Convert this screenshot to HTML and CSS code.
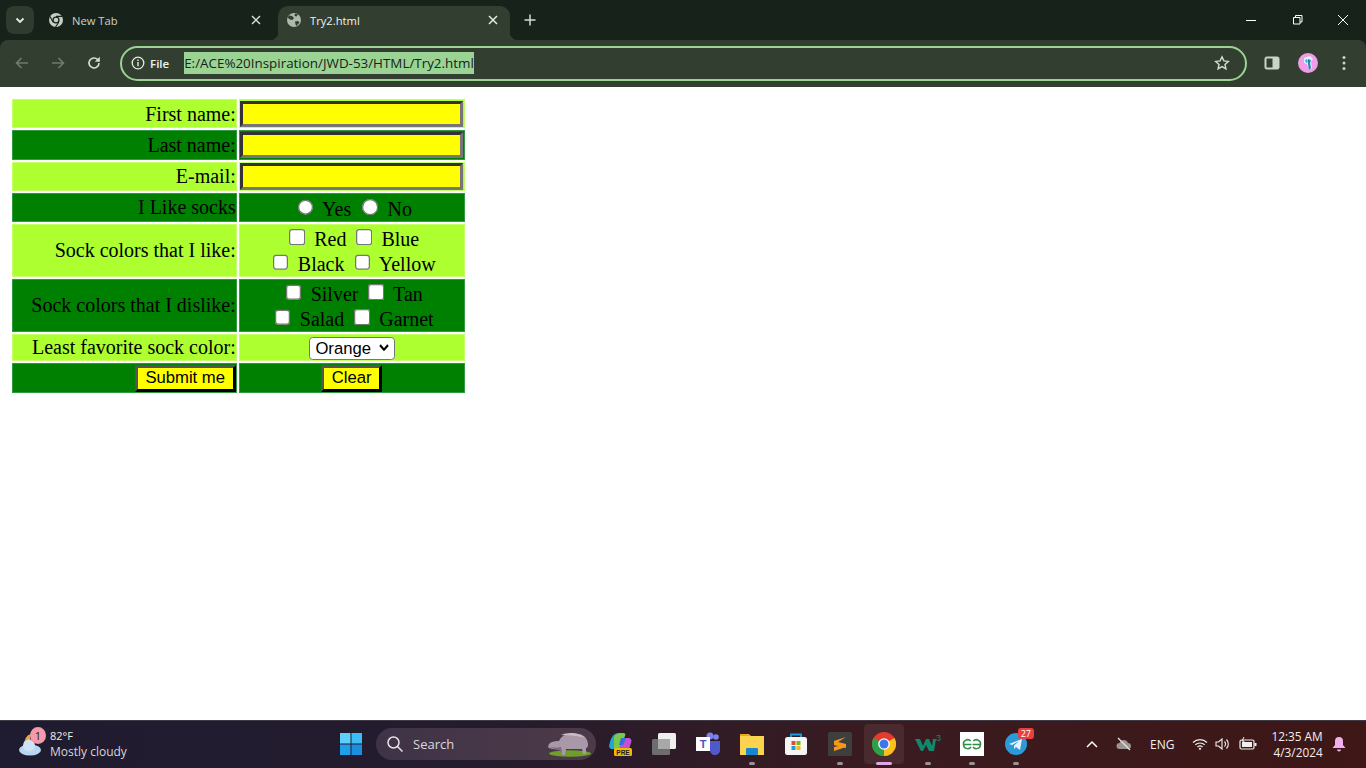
FILE: index.html
```html
<!DOCTYPE html>
<html lang="en">
<head>
  <meta charset="UTF-8">
  <meta name="viewport" content="width=device-width, initial-scale=1.0">
  <title>Try2.html</title>
  <link rel="stylesheet" href="styles.css">
</head>
<body>
  <div class="screen">
    <!-- browser tabs -->
    <div class="tabstrip">
      <div class="tab-search">
        <svg width="12" height="12" viewBox="0 0 12 12"><path d="M2.500 4.500 6 8l3.500-3.500" fill="none" stroke="#e4ece2" stroke-width="1.800"/></svg>
      </div>
      <div class="tab">
        <svg class="favicon" width="16" height="16" viewBox="0 0 16 16"><circle cx="8" cy="8" r="7" fill="#c6cec4"/><circle cx="8" cy="8" r="3.600" fill="#17231a"/><circle cx="8" cy="8" r="2.300" fill="#c6cec4"/><path d="M8 4.400h6M5 10 2 4.500M10.800 10.200 7.500 15" stroke="#17231a" stroke-width="1.100"/></svg>
        <span class="tab-title">New Tab</span>
        <svg class="tab-close" width="10" height="10" viewBox="0 0 10 10"><path d="M1 1l8 8M9 1 1 9" stroke="#d5ddd3" stroke-width="1.500"/></svg>
      </div>
      <div class="tab tab-active">
        <svg class="favicon" width="16" height="16" viewBox="0 0 16 16"><circle cx="8" cy="8" r="7" fill="#aeb8ac"/><path d="M3 3.500l3 .5 2 2-1.500 2-2.500-.5-2.500-2zM9 9.500l3-.5 1.500 1.500-3 3.500-1-1.500zM9 1.500l3 1-1.500 2-2-.5z" fill="#323f30"/></svg>
        <span class="tab-title">Try2.html</span>
        <svg class="tab-close" width="10" height="10" viewBox="0 0 10 10"><path d="M1 1l8 8M9 1 1 9" stroke="#e4ece2" stroke-width="1.500"/></svg>
      </div>
      <svg class="new-tab" width="12" height="12" viewBox="0 0 12 12"><path d="M6 .5v11M.5 6h11" stroke="#d5ddd3" stroke-width="1.500"/></svg>
      <div class="win-buttons">
        <svg width="46" height="12" viewBox="0 0 46 12"><path d="M18 6.500h10" stroke="#fff"/></svg>
        <svg width="46" height="12" viewBox="0 0 46 12"><path d="M19.500 3.500h6.500v6.500h-6.500zM21.500 3.500v-2h6.500v6.500h-2" fill="none" stroke="#fff"/></svg>
        <svg width="46" height="12" viewBox="0 0 46 12"><path d="M18 1l10 10M28 1 18 11" stroke="#fff"/></svg>
      </div>
    </div>

    <!-- address bar -->
    <div class="toolbar">
      <svg class="nav-icon" width="16" height="16" viewBox="0 0 16 16"><path d="M14 8H2.500M7.500 3l-5 5 5 5" fill="none" stroke="#6e7c6c" stroke-width="1.600"/></svg>
      <svg class="nav-icon" width="16" height="16" viewBox="0 0 16 16"><path d="M2 8h11.500M8.500 3l5 5-5 5" fill="none" stroke="#6e7c6c" stroke-width="1.600"/></svg>
      <svg class="nav-icon" width="16" height="16" viewBox="0 0 16 16"><path d="M13 8a5 5 0 1 1-1.500-3.600L13 6" fill="none" stroke="#d5ddd3" stroke-width="1.600"/><path d="M13.800 1.800v5h-5z" fill="#d5ddd3"/></svg>
      <div class="omnibox">
        <svg width="14" height="14" viewBox="0 0 14 14"><circle cx="7" cy="7" r="5.800" fill="none" stroke="#e4ece2" stroke-width="1.300"/><path d="M7 6v4.200M7 3.500v1.500" stroke="#e4ece2" stroke-width="1.400"/></svg>
        <span class="file-chip">File</span>
        <span class="url">E:/ACE%20Inspiration/JWD-53/HTML/Try2.html</span>
        <svg class="star" width="16" height="16" viewBox="0 0 16 16"><path d="M8 1.800l1.900 4.100 4.400.5-3.300 3 .9 4.400L8 11.600l-3.900 2.200.9-4.400-3.300-3 4.400-.5z" fill="none" stroke="#d5ddd3" stroke-width="1.400"/></svg>
      </div>
      <svg class="side-icon" width="16" height="14" viewBox="0 0 16 14"><rect x="1" y="1" width="14" height="12" rx="1.500" fill="#c9d6c6" stroke="#c9d6c6"/><rect x="2.500" y="2.500" width="6" height="9" fill="#323f30"/></svg>
      <svg class="avatar" width="20" height="20" viewBox="0 0 20 20"><circle cx="10" cy="10" r="10" fill="#f29be8"/><path d="M6 5l6-2 3 3-2 3 1 6-3 2-2-6-3-1z" fill="#dff2fb"/><path d="M10 6l3 1-1 3 1 5-2 2-1-6z" fill="#2f7fb5"/><path d="M7 7l2-1 1 3-2 1z" fill="#31b6d8"/></svg>
      <svg class="menu-dots" width="4" height="16" viewBox="0 0 4 16"><circle cx="2" cy="2.500" r="1.500" fill="#c9d6c6"/><circle cx="2" cy="8" r="1.500" fill="#c9d6c6"/><circle cx="2" cy="13.500" r="1.500" fill="#c9d6c6"/></svg>
    </div>

    <!-- the page itself, shown at 125% -->
    <main class="page">
      <form>
        <table class="sock-form">
          <tr class="light">
            <td class="label">First name:</td>
            <td class="field"><input type="text" class="text-input"></td>
          </tr>
          <tr class="dark">
            <td class="label">Last name:</td>
            <td class="field"><input type="text" class="text-input"></td>
          </tr>
          <tr class="light">
            <td class="label">E-mail:</td>
            <td class="field"><input type="text" class="text-input"></td>
          </tr>
          <tr class="dark">
            <td class="label">I Like socks</td>
            <td class="field">
              <input type="radio" name="likes"> Yes
              <input type="radio" name="likes"> No
            </td>
          </tr>
          <tr class="light">
            <td class="label">Sock colors that I like:</td>
            <td class="field">
              <input type="checkbox"> Red
              <input type="checkbox"> Blue<br>
              <input type="checkbox"> Black
              <input type="checkbox"> Yellow
            </td>
          </tr>
          <tr class="dark">
            <td class="label">Sock colors that I dislike:</td>
            <td class="field">
              <input type="checkbox"> Silver
              <input type="checkbox"> Tan<br>
              <input type="checkbox"> Salad
              <input type="checkbox"> Garnet
            </td>
          </tr>
          <tr class="light">
            <td class="label">Least favorite sock color:</td>
            <td class="field">
              <select class="color-select"><option>Orange</option><option>Silver</option><option>Tan</option></select>
            </td>
          </tr>
          <tr class="dark">
            <td class="label"><button type="submit" class="form-btn">Submit me</button></td>
            <td class="field"><button type="reset" class="form-btn">Clear</button></td>
          </tr>
        </table>
      </form>
    </main>

    <!-- windows taskbar -->
    <footer class="taskbar">
      <div class="weather">
        <div class="weather-icon">
          <svg width="28" height="28" viewBox="0 0 28 28"><path d="M8 14a8 8 0 0 1 6-10 7 7 0 0 0 3 10z" fill="#f0a63a"/><ellipse cx="13" cy="20" rx="11" ry="5.500" fill="#b8d6f0"/><circle cx="12" cy="15.500" r="6" fill="#cfe3f5"/></svg>
          <span class="weather-badge">1</span>
        </div>
        <div class="weather-text">
          <span class="temp">82°F</span>
          <span class="cond">Mostly cloudy</span>
        </div>
      </div>

      <div class="task-center">
        <div class="task-slot">
          <svg width="24" height="24" viewBox="0 0 24 24"><path d="M1 1h10.500v10.500H1z" fill="#5cd0fb"/><path d="M12.500 1H23v10.500H12.500z" fill="#3dbdf5"/><path d="M1 12.500h10.500V23H1z" fill="#1f9fe8"/><path d="M12.500 12.500H23V23H12.500z" fill="#1a8fe0"/></svg>
        </div>
        <div class="search-box">
          <svg width="18" height="18" viewBox="0 0 18 18"><circle cx="7.500" cy="7.500" r="5.500" fill="none" stroke="#e6e3e6" stroke-width="1.500"/><path d="M11.500 11.500l5 5" stroke="#e6e3e6" stroke-width="1.500"/></svg>
          <span class="search-label">Search</span>
          <svg class="search-pig" width="44" height="26" viewBox="0 0 44 26"><ellipse cx="23" cy="22.500" rx="21" ry="3.200" fill="#6f9f2a"/><path d="M12 10c3-7 12-9 20-7 6 1 9 6 9 11 0 2-1 3-2 3v6h-3l-1-5H19l-1 6h-3l-1-6c-3 1-9 0-12-1-2-1 0-5 3-6 2-1 5-1 7-1z" fill="#a998a8"/><path d="M14 4c6-3 18-3 24 3-8-3-16-2-24-3z" fill="#c9bac6"/><path d="M2 15c4 2 8 2 12 1l1 6-3-3c-3 0-7-2-10-4z" fill="#7c6e7a"/></svg>
        </div>
        <div class="task-icons">
          <div class="task-slot">
            <svg width="26" height="26" viewBox="0 0 26 26"><path d="M2 16C3 8 6 2 12 2h5l-6 16H4z" fill="#1ea7d8"/><path d="M7 6c2-4 6-4 9-4 2 0 3 1 2 3l-5 13H7z" fill="#7cc84a"/><path d="M15 7h6c3 0 4 2 3 5l-2 6H12z" fill="#c44fd0"/><path d="M14 7h5l-3 7h-4z" fill="#2f6fe0"/><rect x="7" y="17" width="18" height="8" rx="1.500" fill="#f5b800"/><text x="16" y="23.500" class="pre-text">PRE</text></svg>
          </div>
          <div class="task-slot">
            <svg width="26" height="24" viewBox="0 0 26 24"><rect x="7" y="1" width="18" height="16" rx="1.500" fill="#efefef"/><rect x="1" y="7" width="18" height="16" rx="1.500" fill="#6d6d6d"/><rect x="7" y="7" width="12" height="10" fill="#a8a8a8"/></svg>
          </div>
          <div class="task-slot">
            <svg width="26" height="24" viewBox="0 0 26 24"><circle cx="21" cy="5" r="2.800" fill="#7b83eb"/><circle cx="15" cy="4" r="3.500" fill="#7b83eb"/><path d="M13 9h12v8a5 5 0 0 1-10 2l-2-3z" fill="#5059c9"/><rect x="1" y="5" width="14" height="14" fill="#fff"/><text x="8" y="16" class="teams-text">T</text></svg>
          </div>
          <div class="task-slot">
            <svg width="26" height="24" viewBox="0 0 26 24"><path d="M1 2h9l2 2h-11z" fill="#e8a820"/><path d="M1 4h24v19H1z" fill="#fbd34e"/><rect x="7" y="16" width="12" height="7" rx="1" fill="#1b86d0"/></svg>
            <span class="run-dot"></span>
          </div>
          <div class="task-slot">
            <svg width="24" height="24" viewBox="0 0 24 24"><path d="M7 6V2.500h10V6" fill="none" stroke="#1b9ee0" stroke-width="1.800"/><rect x="1" y="5" width="22" height="18" rx="2.500" fill="#f5f5f5"/><rect x="7.500" y="9" width="4" height="4" fill="#e2522b"/><rect x="12.500" y="9" width="4" height="4" fill="#7fb61c"/><rect x="7.500" y="14" width="4" height="4" fill="#1b9ee0"/><rect x="12.500" y="14" width="4" height="4" fill="#fbb900"/></svg>
          </div>
          <div class="task-slot">
            <svg width="24" height="24" viewBox="0 0 24 24"><rect width="24" height="24" rx="1.500" fill="#3e3e3e"/><path d="M18 5 6 9v4l12 3v-4L10 10zM6 19l12-4v-3L6 15z" fill="#f79a1a"/></svg>
            <span class="run-dot"></span>
          </div>
          <div class="task-slot slot-active">
            <svg width="24" height="24" viewBox="0 0 24 24"><circle cx="12" cy="12" r="12" fill="#e33b2e"/><path d="M12 12 22.400 6A12 12 0 0 1 12 24z" fill="#fbc116"/><path d="M12 12 12 24A12 12 0 0 1 1.600 6z" fill="#2aa24a"/><circle cx="12" cy="12" r="5.800" fill="#fff"/><circle cx="12" cy="12" r="4.500" fill="#3b78e7"/></svg>
            <span class="run-dot dot-active"></span>
          </div>
          <div class="task-slot">
            <svg width="26" height="20" viewBox="0 0 26 20"><path d="M0 5h5l3 7 3-7h3l3 7 1-7h3l-2 12h-5l-3-6-3 6H6z" fill="#0f8a6d"/><text x="21" y="7" class="w-sup">3</text></svg>
            <span class="run-dot"></span>
          </div>
          <div class="task-slot">
            <svg width="24" height="24" viewBox="0 0 24 24"><rect width="24" height="24" fill="#fff"/><path d="M11.500 12.500H3.500a4.200 4.200 0 0 1 7.200-3.500M3.500 12.500a4.200 4.200 0 0 0 7.500 2.500M12.500 12.500h8a4.200 4.200 0 0 0-7.200-3.500M20.500 12.500a4.200 4.200 0 0 1-7.500 2.500" fill="none" stroke="#2f8d46" stroke-width="1.500"/></svg>
            <span class="run-dot"></span>
          </div>
          <div class="task-slot">
            <svg width="22" height="22" viewBox="0 0 22 22"><circle cx="11" cy="11" r="11" fill="#2a9bd8"/><path d="M4 11l13-5-2 11-4-3-2 2v-3.500l5-4.500-7 4z" fill="#e6f3fb"/></svg>
            <span class="tg-badge">27</span>
            <span class="run-dot"></span>
          </div>
        </div>
      </div>

      <div class="tray">
        <svg class="tray-chevron" width="12" height="8" viewBox="0 0 12 8"><path d="M1 7l5-5 5 5" fill="none" stroke="#fff" stroke-width="1.500"/></svg>
        <svg class="tray-cloud" width="16" height="14" viewBox="0 0 16 14"><path d="M3.500 12a3 3 0 0 1 0-6 4.500 4.500 0 0 1 8.500 0 3 3 0 0 1 0 6z" fill="#9a9492"/><path d="M2 1l12 12" stroke="#e8e4e2" stroke-width="1.300"/></svg>
        <span class="tray-lang">ENG</span>
        <svg class="tray-wifi" width="16" height="12" viewBox="0 0 16 12"><path d="M1 4.500a10 10 0 0 1 14 0M3.300 6.800a7 7 0 0 1 9.400 0M5.500 9a3.800 3.800 0 0 1 5 0" fill="none" stroke="#f2eeee" stroke-width="1.200"/><circle cx="8" cy="10.800" r="1.100" fill="#f2eeee"/></svg>
        <svg class="tray-vol" width="16" height="14" viewBox="0 0 16 14"><path d="M1 5h2.500L7 2v10L3.500 9H1z" fill="none" stroke="#f2eeee" stroke-width="1.100"/><path d="M9.500 4.500a3.500 3.500 0 0 1 0 5M11.500 2.500a6.500 6.500 0 0 1 0 9" fill="none" stroke="#f2eeee" stroke-width="1.100"/></svg>
        <svg class="tray-batt" width="18" height="14" viewBox="0 0 18 14"><rect x="1" y="3" width="14" height="9" rx="1.500" fill="none" stroke="#f2eeee" stroke-width="1.200"/><rect x="3" y="5" width="10" height="5" fill="#f2eeee"/><rect x="15.500" y="6" width="2" height="3" fill="#f2eeee"/><path d="M5 0 3 4h2L4 7" fill="none" stroke="#f2eeee"/></svg>
        <div class="clock">
          <span>12:35 AM</span>
          <span>4/3/2024</span>
        </div>
        <svg class="tray-bell" width="14" height="16" viewBox="0 0 14 16"><path d="M7 1a4 4 0 0 1 4 4v4l2.500 3H.5L3 9V5a4 4 0 0 1 4-4z" fill="#f0b0ee"/><path d="M5 13.500h4a2 2 0 0 1-4 0z" fill="#f0b0ee"/></svg>
      </div>
    </footer>
  </div>
</body>
</html>
```

FILE: styles.css
```css
* {
  box-sizing: border-box;
}

html, body {
  margin: 0;
  height: 100%;
  overflow: hidden;
}

.screen {
  display: flex;
  flex-direction: column;
  width: 1366px;
  height: 768px;
  background-color: #17231a;
}

/* tab strip */
.tabstrip {
  display: flex;
  align-items: flex-start;
  height: 40px;
  padding-left: 6px;
  background-color: #17231a;
  font-family: "Open Sans", sans-serif;
  font-size: 11.200px;
}

.tab-search {
  display: flex;
  align-items: center;
  justify-content: center;
  width: 28px;
  height: 28px;
  margin-top: 6px;
  margin-right: 4px;
  border-radius: 8px;
  background-color: #2f3b2e;
}

.tab {
  display: flex;
  align-items: center;
  width: 240px;
  height: 34px;
  margin-top: 6px;
  padding: 0 17px 6px 10px;
  color: #c9d1c7;
}

.tab-active {
  position: relative;
  width: 232px;
  padding: 0 12px 6px 8px;
  border-radius: 10px 10px 0 0;
  background-color: #323f30;
  color: #eef2ec;
}

.tab-active::before,
.tab-active::after {
  content: "";
  position: absolute;
  bottom: 0;
  width: 8px;
  height: 8px;
}

.tab-active::before {
  left: -8px;
  background: radial-gradient(circle at 0 0, #17231a 8px, #323f30 8.500px);
}

.tab-active::after {
  right: -8px;
  background: radial-gradient(circle at 100% 0, #17231a 8px, #323f30 8.500px);
}

.favicon {
  flex: none;
  margin-right: 8px;
}

.tab-title {
  flex: 1;
}

.tab-close {
  flex: none;
}

.new-tab {
  margin: 14px 0 0 14px;
}

.win-buttons {
  display: flex;
  margin-top: 14px;
  margin-left: auto;
}

/* address bar */
.toolbar {
  display: flex;
  align-items: center;
  height: 47px;
  padding-left: 4px;
  padding-bottom: 1px;
  border-radius: 8px 8px 0 0;
  background-color: #323f30;
  font-family: "Open Sans", sans-serif;
}

.nav-icon {
  flex: none;
  margin: 0 10px;
  width: 16px;
}

.omnibox {
  display: flex;
  align-items: center;
  width: 1127px;
  height: 35px;
  margin-left: 8px;
  padding: 0 15px 0 9px;
  border: 2px solid #9ad393;
  border-radius: 18px;
}

.file-chip {
  margin-left: 5px;
  color: #eef2ec;
  font-size: 11.500px;
  font-weight: 600;
}

.url {
  margin-left: 15px;
  background-color: #9ad393;
  color: #17231a;
  font-size: 13.400px;
  line-height: 22px;
}

.star {
  margin-left: auto;
}

.side-icon {
  margin-left: 17px;
}

.avatar {
  margin-left: 18px;
}

.menu-dots {
  margin-left: 24px;
}

/* the form, the browser window is zoomed to 125% */
.page {
  flex: 1;
  padding: 8px;
  background-color: #fff;
  zoom: 1.25;
}

.sock-form {
  width: 365.200px;
  font-family: "Liberation Serif", serif;
  font-size: 16px;
  color: #000;
}

.sock-form td {
  padding: 0.700px 0.200px 0.100px;
  border: 0.800px solid;
}

.sock-form input[type="radio"] {
  margin-top: 3.800px;
}

.light td {
  background-color: #adff2f;
  border-color: #c4ff66;
}

.dark td {
  background-color: #008000;
  border-color: #2f9a3f;
}

.label {
  width: 184px;
  text-align: right;
}

.field {
  width: 179.200px;
  text-align: center;
}

.text-input {
  width: 178.400px;
  height: 21px;
  background-color: #ff0;
  border: 2.400px solid;
  border-color: #333 #767676 #767676 #333;
}

.color-select {
  width: 68.800px;
  height: 18.500px;
  padding-left: 4.500px;
  appearance: none;
  border: 0.800px solid #767676;
  border-radius: 3px;
  background: #fff url("data:image/svg+xml,%3Csvg xmlns='http://www.w3.org/2000/svg' width='10' height='7'%3E%3Cpath d='M1 1l4 4 4-4' fill='none' stroke='%23000' stroke-width='2'/%3E%3C/svg%3E") no-repeat right 4px center / 8px 6px;
  font-family: "Liberation Sans", sans-serif;
  font-size: 13.333px;
}

.form-btn {
  padding: 0.400px 6.200px;
  border: 2.400px solid;
  border-color: #555 #000 #000 #555;
  background-color: #ff0;
  color: #000;
  font-family: "Liberation Sans", sans-serif;
  font-size: 13.333px;
}

.pre-text {
  font-family: "Liberation Sans", sans-serif;
  font-size: 6.500px;
  font-weight: 700;
  text-anchor: middle;
  fill: #222;
}

.teams-text {
  font-family: "Liberation Sans", sans-serif;
  font-size: 11px;
  font-weight: 700;
  text-anchor: middle;
  fill: #4b53bc;
}

.w-sup {
  font-family: "Liberation Sans", sans-serif;
  font-size: 9px;
  fill: #0f8a6d;
}

/* taskbar */
.taskbar {
  display: flex;
  align-items: center;
  height: 48px;
  padding-bottom: 1px;
  border-top: 1px solid #3f3a46;
  background: linear-gradient(90deg, #1f1b30 0%, #241c2e 35%, #3a1b20 65%, #3e1716 100%);
  color: #f2eeee;
  font-family: "Open Sans", sans-serif;
  font-size: 12px;
}

.weather {
  display: flex;
  align-items: center;
  width: 329px;
  padding-left: 17px;
}

.weather-icon {
  position: relative;
  width: 28px;
  height: 28px;
}

.weather-badge {
  position: absolute;
  top: -3px;
  left: 13px;
  width: 16px;
  height: 17px;
  border-radius: 50%;
  background-color: #f59aa6;
  color: #2a1a22;
  font-size: 11px;
  line-height: 17px;
  text-align: center;
}

.weather-text {
  display: flex;
  flex-direction: column;
  margin-left: 5px;
  line-height: 16px;
}

.temp {
  font-size: 11px;
}

.cond {
  color: #d8d4d8;
}

.task-center {
  display: flex;
  align-items: center;
}

.task-slot {
  position: relative;
  display: flex;
  align-items: center;
  justify-content: center;
  width: 44px;
  height: 40px;
}

.slot-active {
  width: 40px;
  margin: 0 2px;
  border-radius: 4px;
  background-color: #4a2a2e;
}

.search-box {
  display: flex;
  align-items: center;
  width: 220px;
  height: 32px;
  margin-left: 3px;
  padding: 0 5px 0 10px;
  border-radius: 16px;
  background: linear-gradient(90deg, #3f3347, #4d3a48);
}

.search-label {
  margin-left: 9px;
  font-size: 13px;
  color: #dcd8dc;
}

.search-pig {
  margin-left: auto;
}

.task-icons {
  display: flex;
  margin-left: 2px;
}

.run-dot {
  position: absolute;
  left: 19px;
  bottom: -1px;
  width: 6px;
  height: 3px;
  border-radius: 2px;
  background-color: #9c9296;
}

.dot-active {
  left: 12px;
  width: 16px;
  background-color: #e2a6e6;
}

.tg-badge {
  position: absolute;
  top: 4px;
  right: 4px;
  padding: 0 3px;
  border-radius: 3px;
  background-color: #e8403f;
  color: #fff;
  font-size: 9px;
  line-height: 11px;
}

.tray {
  display: flex;
  align-items: center;
  margin-left: 48px;
}

.tray-cloud {
  margin-left: 18px;
}

.tray-lang {
  margin-left: 18px;
  font-size: 12px;
}

.tray-wifi {
  margin-left: 18px;
}

.tray-vol {
  margin-left: 7px;
}

.tray-batt {
  margin-left: 8px;
}

.clock {
  display: flex;
  flex-direction: column;
  align-items: flex-end;
  margin-left: 14px;
  line-height: 16px;
  font-size: 11.800px;
}

.tray-bell {
  margin-left: 9px;
}
```
